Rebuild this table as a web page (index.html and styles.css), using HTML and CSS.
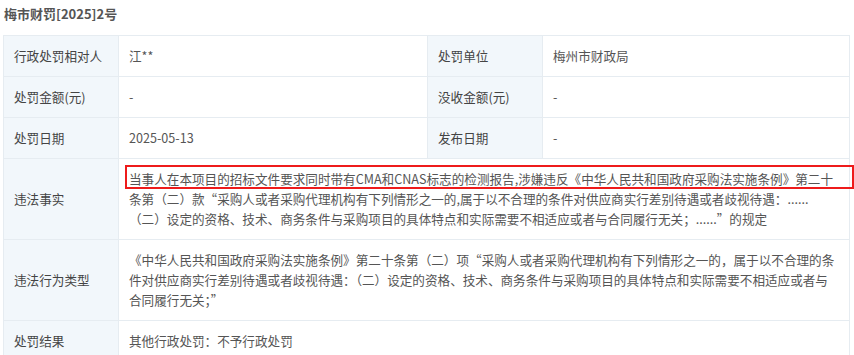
FILE: index.html
```html
<!DOCTYPE html>
<html lang="zh-CN">
<head>
<meta charset="utf-8">
<link rel="stylesheet" href="styles.css">
</head>
<body>
<div class="page">
  <h1 class="doc-no">梅市财罚[2025]2号</h1>
  <table class="info">
    <colgroup>
      <col class="c-label"><col class="c-value"><col class="c-label"><col>
    </colgroup>
    <tr>
      <th>行政处罚相对人</th><td>江**</td>
      <th>处罚单位</th><td>梅州市财政局</td>
    </tr>
    <tr>
      <th>处罚金额(元)</th><td>-</td>
      <th>没收金额(元)</th><td>-</td>
    </tr>
    <tr>
      <th>处罚日期</th><td>2025-05-13</td>
      <th>发布日期</th><td>-</td>
    </tr>
    <tr>
      <th>违法事实</th>
      <td colspan="3" class="long">
        <div class="fact">当事人在本项目的招标文件要求同时带有CMA和CNAS标志的检测报告,涉嫌违反《中华人民共和国政府采购法实施条例》第二十条第（二）款“采购人或者采购代理机构有下列情形之一的,属于以不合理的条件对供应商实行差别待遇或者歧视待遇：......（二）设定的资格、技术、商务条件与采购项目的具体特点和实际需要不相适应或者与合同履行无关；......”的规定<span class="mark"></span></div>
      </td>
    </tr>
    <tr>
      <th>违法行为类型</th>
      <td colspan="3" class="long">《中华人民共和国政府采购法实施条例》第二十条第（二）项“采购人或者采购代理机构有下列情形之一的，属于以不合理的条件对供应商实行差别待遇或者歧视待遇：（二）设定的资格、技术、商务条件与采购项目的具体特点和实际需要不相适应或者与合同履行无关；”</td>
    </tr>
    <tr>
      <th>处罚结果</th>
      <td colspan="3">其他行政处罚：不予行政处罚</td>
    </tr>
  </table>
</div>
</body>
</html>
```

FILE: styles.css
```css
html, body {
  margin: 0;
  padding: 0;
  background: #ffffff;
}
body {
  font-family: "Noto Sans CJK SC", "Noto Sans", sans-serif;
  color: #555;
}
.page {
  padding: 0 4px 0 3px;
}
.doc-no {
  margin: 0;
  padding: 5px 0 0 1px;
  height: 30px;
  font-size: 13px;
  line-height: 18px;
  font-weight: bold;
  color: #555;
}
.info {
  width: 847px;
  border-collapse: collapse;
  table-layout: fixed;
  font-size: 12.6px;
  line-height: 20px;
}
.c-label { width: 115px; }
.c-value { width: 309px; }
.info th, .info td {
  border: 1px solid #e6ecf1;
  padding: 10px;
  text-align: left;
  vertical-align: middle;
  font-weight: normal;
}
.info th {
  background: #f2f7fb;
  color: #444;
}
.info td {
  color: #555;
}
.fact {
  position: relative;
}
.mark {
  position: absolute;
  left: -4px;
  top: -4px;
  width: 725px;
  height: 20px;
  border: 2px solid #ee1b1b;
}
```
